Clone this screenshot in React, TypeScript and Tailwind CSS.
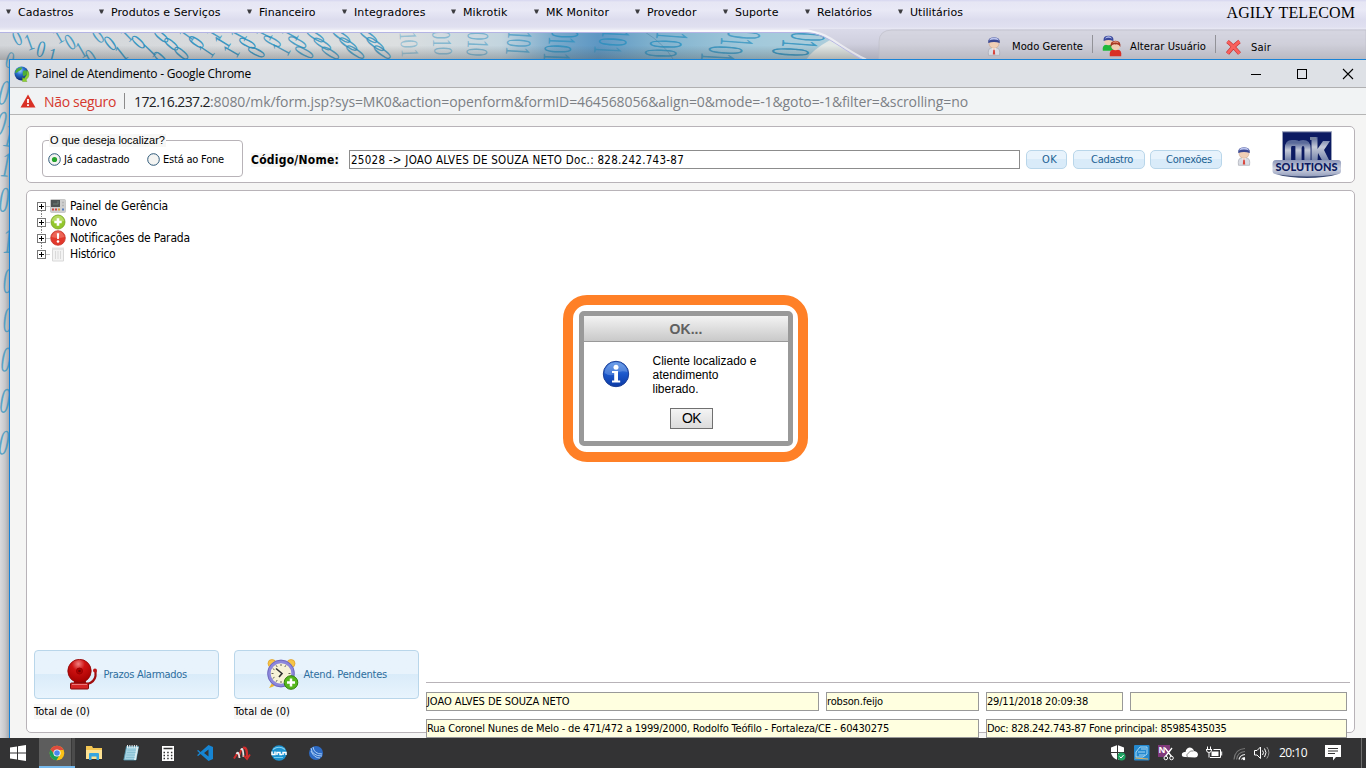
import { useLayoutEffect, useRef, useState } from "react";
import type { ReactNode } from "react";

/* Single line of text whose tracking is adjusted so that it fills the given width. */
function Fit({ w, className = "", children }: { w: number; className?: string; children: string }) {
  const ref = useRef<HTMLSpanElement>(null);
  const [spacing, setSpacing] = useState(0);
  useLayoutEffect(() => {
    if (ref.current) {
      const natural = ref.current.getBoundingClientRect().width;
      setSpacing((w - natural) / children.length);
    }
  }, [w, children]);
  return (
    <span ref={ref} className={`inline-block whitespace-pre ${className}`} style={{ letterSpacing: spacing }}>
      {children}
    </span>
  );
}

const menu = [
  { label: "Cadastros", w: 55.5, box: "w-[93px]" },
  { label: "Produtos e Serviços", w: 109.5, box: "w-[148px]" },
  { label: "Financeiro", w: 56.5, box: "w-[95px]" },
  { label: "Integradores", w: 71.5, box: "w-[109px]" },
  { label: "Mikrotik", w: 44.5, box: "w-[83px]" },
  { label: "MK Monitor", w: 63, box: "w-[101px]" },
  { label: "Provedor", w: 49.5, box: "w-[88px]" },
  { label: "Suporte", w: 43.5, box: "w-[82px]" },
  { label: "Relatórios", w: 55, box: "w-[93px]" },
  { label: "Utilitários", w: 53, box: "w-[93px]" },
];

/* glyph, centre x, centre y, rotation, length of the glyph, opacity */
const topDigits: [string, number, number, number, number, number][] = [
  ["0", 17, 38, -24, 15, 0.8],
  ["1", 29, 42, -20, 16, 0.8],
  ["0", 41, 49, 14, 16, 0.9],
  ["1", 52, 56, 14, 16, 0.9],
  ["0", 10, 60, 15, 16, 0.7],
  ["1", 58, 36, -30, 15, 0.8],
  ["0", 70, 42, -30, 16, 0.8],
  ["1", 81, 50, -30, 16, 0.8],
  ["0", 91, 57, -32, 16, 0.8],
  ["0", 98, 36, -38, 15, 0.8],
  ["0", 110, 43, -38, 16, 0.9],
  ["1", 121, 53, -38, 16, 0.9],
  ["1", 126, 35, -44, 15, 0.8],
  ["0", 138, 42, -46, 16, 0.9],
  ["1", 149, 50, -46, 16, 0.9],
  ["0", 160, 58, -46, 16, 0.9],
  ["0", 161, 36, -50, 17, 0.9],
  ["0", 171, 44, -50, 17, 0.9],
  ["0", 181, 53, -50, 17, 0.9],
  ["1", 186, 35, -54, 17, 0.8],
  ["0", 196, 42, -55, 17, 0.9],
  ["1", 206, 51, -56, 17, 0.9],
  ["1", 213, 34, -58, 17, 0.8],
  ["1", 222, 42, -58, 17, 0.9],
  ["1", 231, 51, -60, 17, 0.9],
  ["1", 238, 35, -62, 17, 0.8],
  ["0", 247, 43, -62, 18, 0.9],
  ["0", 256, 52, -64, 18, 0.9],
  ["1", 263, 34, -62, 18, 0.8],
  ["0", 272, 41, -62, 19, 0.8],
  ["1", 281, 49, -62, 19, 0.8],
  ["1", 289, 34, -62, 19, 0.8],
  ["0", 297, 42, -62, 20, 0.8],
  ["0", 304, 52, -62, 20, 0.8],
  ["0", 315, 36, -58, 20, 0.8],
  ["0", 322, 44, -58, 20, 0.8],
  ["0", 330, 53, -58, 20, 0.8],
  ["0", 341, 36, -56, 21, 0.8],
  ["0", 348, 44, -56, 21, 0.8],
  ["0", 355, 52, -56, 21, 0.8],
  ["0", 368, 36, -54, 21, 0.8],
  ["0", 375, 44, -54, 21, 0.8],
  ["0", 382, 52, -54, 20, 0.8],
  ["1", 408, 36, 88, 17, 0.4],
  ["0", 409, 44, 88, 17, 0.4],
  ["1", 410, 53, 88, 17, 0.4],
  ["0", 441, 35, 90, 19, 0.45],
  ["1", 442, 43, 90, 19, 0.45],
  ["0", 443, 51, 90, 19, 0.45],
  ["0", 478, 36, 92, 21, 0.5],
  ["1", 478, 44, 92, 21, 0.5],
  ["0", 477, 52, 92, 21, 0.5],
  ["1", 520, 35, 93, 24, 0.6],
  ["0", 519, 43, 93, 24, 0.6],
  ["1", 518, 51, 93, 24, 0.6],
  ["0", 565, 34, 92, 27, 0.8],
  ["1", 562, 41, 92, 27, 0.7],
  ["0", 558, 49, 92, 27, 0.8],
  ["1", 557, 57, 92, 27, 0.7],
  ["1", 616, 34, 93, 28, 0.7],
  ["0", 613, 42, 93, 28, 0.8],
  ["1", 608, 50, 93, 28, 0.6],
  ["1", 672, 36, 94, 32, 0.7],
  ["0", 666, 44, 92, 32, 0.8],
  ["0", 661, 53, 92, 32, 0.8],
  ["0", 744, 35, 94, 33, 0.7],
  ["1", 737, 42, 94, 33, 0.7],
  ["0", 726, 50, 93, 34, 0.8],
  ["1", 718, 57, 93, 34, 0.7],
  ["0", 808, 37, 94, 34, 0.8],
  ["1", 800, 44, 94, 36, 0.8],
  ["0", 791, 52, 93, 37, 0.9],
];

const sideDigits: [string, number, number, number][] = [
  ["0", 4, 93, 8],
  ["0", 1, 124, 10],
  ["1", 9, 135, 8],
  ["1", 6, 165, 5],
  ["0", 4, 200, 2],
  ["1", 8, 241, 0],
  ["0", 8, 281, 0],
  ["0", 8, 320, 0],
  ["0", 6, 360, 3],
  ["0", 5, 401, 4],
  ["0", 4, 443, 5],
];

function Backdrop() {
  return (
    <svg className="absolute inset-0" width="1366" height="768" viewBox="0 0 1366 768" aria-hidden="true">
      <defs>
        <linearGradient id="sky" x1="0" x2="880" y1="0" y2="0" gradientUnits="userSpaceOnUse">
          <stop offset="0" stopColor="#d3d6da" />
          <stop offset="0.45" stopColor="#dcdfe0" />
          <stop offset="0.57" stopColor="#c3d5df" />
          <stop offset="0.63" stopColor="#7aaacb" />
          <stop offset="0.68" stopColor="#5e97c3" />
          <stop offset="0.74" stopColor="#7eb0cd" />
          <stop offset="0.85" stopColor="#a2c9db" />
          <stop offset="0.94" stopColor="#abcddb" />
          <stop offset="0.96" stopColor="#dce6e6" />
          <stop offset="1" stopColor="#e6e7e7" />
        </linearGradient>
        <linearGradient id="side" x1="0" x2="10" y1="0" y2="0" gradientUnits="userSpaceOnUse">
          <stop offset="0" stopColor="#d9dadd" />
          <stop offset="0.5" stopColor="#c7c8cb" />
          <stop offset="1" stopColor="#9fa1a5" />
        </linearGradient>
        <linearGradient id="shade" x1="0" x2="0" y1="32" y2="59" gradientUnits="userSpaceOnUse">
          <stop offset="0.5" stopColor="#555" stopOpacity="0" />
          <stop offset="1" stopColor="#555" stopOpacity="0.35" />
        </linearGradient>
        <linearGradient id="bar" x1="0" x2="0" y1="0" y2="33" gradientUnits="userSpaceOnUse">
          <stop offset="0" stopColor="#d6d6f0" />
          <stop offset="0.06" stopColor="#e6e6f4" />
          <stop offset="0.3" stopColor="#e9e9f6" />
          <stop offset="0.6" stopColor="#dcdcee" />
          <stop offset="0.82" stopColor="#e0e0f0" />
          <stop offset="0.94" stopColor="#f2f2f8" />
          <stop offset="1" stopColor="#f0f0f8" />
        </linearGradient>
        <linearGradient id="tools" x1="0" x2="0" y1="29" y2="59" gradientUnits="userSpaceOnUse">
          <stop offset="0" stopColor="#dadae9" />
          <stop offset="0.5" stopColor="#cfcfde" />
          <stop offset="1" stopColor="#adadb9" />
        </linearGradient>
      </defs>
      <rect width="10" height="768" fill="url(#side)" />
      <rect x="0" y="32" width="900" height="28" fill="url(#sky)" />
      <path d="M645 32Q664 44 673 59" fill="none" stroke="#4d83a5" strokeOpacity="0.5" />
      <path d="M830 40Q812 50 806 60H880L850 40Z" fill="#e2e8e6" />
      <g fill="#278ebd" fontFamily="Liberation Serif, serif" textAnchor="middle">
        {topDigits.map(([d, x, y, r, len, o], i) => (
          <text
            key={i}
            transform={`translate(${x} ${y}) rotate(${r}) scale(0.85 ${len / 13.5})`}
            y="6.7"
            fontSize="20"
            fillOpacity={o}
          >
            {d}
          </text>
        ))}
        {sideDigits.map(([d, x, y, r], i) => (
          <text key={i} transform={`translate(${x} ${y}) rotate(${r}) skewX(-6) scale(0.8 1.45)`} y="8" fontSize="25" fillOpacity="0.7">
            {d}
          </text>
        ))}
      </g>
      <rect x="0" y="32" width="900" height="28" fill="url(#shade)" />
      <path d="M0 0H1366V60H863C846 51 832 40 823 36Q814 32 805 32H0Z" fill="url(#bar)" />
      <path d="M808 29H1366V60H863C846 51 832 40 823 36Q815 31 808 29Z" fill="url(#tools)" />
      <path d="M0 32.5H805Q814 32.5 823 36.500C832 40 846 51 863 60" fill="none" stroke="#b4b4e4" />
      <path d="M0 31H806Q815 31 825 35.500C836 41 848 51 866 59.500" fill="none" stroke="#fff" strokeOpacity="0.6" strokeWidth="2" />
      <path d="M879 60V42Q879 30 892 30H1366V60Z" fill="#d0d0d4" fillOpacity="0.35" stroke="#bdbdc6" strokeOpacity="0.6" />
    </svg>
  );
}

function Person() {
  return (
    <svg width="16" height="20" viewBox="0 0 16 20">
      <path d="M2.500 19.300Q1.500 12.500 5 12H11Q14.500 12.500 13.500 19.300Z" fill="#d9dce4" stroke="#a9abb5" strokeWidth="0.7" />
      <path d="M5.500 12L8 15 10.500 12Z" fill="#fff" />
      <path d="M7.300 13.500H8.700L9.200 18.500H6.800Z" fill="#d9443b" />
      <ellipse cx="8" cy="7.500" rx="5" ry="4.800" fill="#f0cfb6" stroke="#c4a08a" strokeWidth="0.5" />
      <path d="M2.200 7Q1.500 1.300 8 1.200 14.500 1.300 13.800 7 11 6 8 6 5 6 2.200 7Z" fill="#3a4791" />
      <path d="M3 4.500Q4 1.500 8 1.500 12 1.500 13 4.500 8 2.500 3 4.500Z" fill="#bcc5ee" />
    </svg>
  );
}

function WindowIcons() {
  return (
    <div className="flex items-center">
      <svg width="110" height="14" viewBox="0 0 110 14" fill="none" stroke="#000">
        <path d="M2 7.500H12" />
        <rect x="48.500" y="2.500" width="9" height="9" />
        <path d="M94 2L104 12M104 2L94 12" strokeWidth="1.100" />
      </svg>
    </div>
  );
}

function Globe() {
  return (
    <svg width="16" height="16" viewBox="0 0 16 16">
      <defs>
        <radialGradient id="globe" cx="0.4" cy="0.3" r="0.7">
          <stop offset="0" stopColor="#a5d8ff" />
          <stop offset="0.4" stopColor="#2a74d2" />
          <stop offset="1" stopColor="#0b2570" />
        </radialGradient>
      </defs>
      <circle cx="7.500" cy="7.500" r="7" fill="url(#globe)" />
      <path d="M2 4Q4 1 8 1.200 8 4 5 5 3 7 1 7ZM9 5Q13 3 13.500 7 12 10 9.500 10.500 8 8 9 5Z" fill="#4cae3b" />
      <path d="M13 4Q17.500 9 12 14L13 15.500 8.500 15.500 8.500 11.500 10.200 12.500Q14 9 13 4Z" fill="#8ed32f" stroke="#5d9b1b" strokeWidth="0.4" />
    </svg>
  );
}

const tahoma = "font-['DejaVu_Sans_Condensed','DejaVu_Sans',sans-serif]";

function Radio({ on }: { on?: boolean }) {
  return (
    <svg width="13" height="13" viewBox="0 0 13 13">
      <circle cx="6.500" cy="6.500" r="5.800" fill="#f4f4f2" stroke="#2d5878" strokeWidth="1" />
      {on && <circle cx="6.500" cy="6.500" r="2.600" fill="#25a32b" />}
    </svg>
  );
}

function PillButton({ w, className, children }: { w: number; className: string; children: string }) {
  return (
    <button
      className={`flex h-[19px] items-center rounded-[5px] border border-[#b9d6ea] bg-linear-to-b from-[#e8f3fc] from-50% to-[#d9ebf9] to-50% pt-[2px] text-[11px] text-[#216293] ${className}`}
    >
      <Fit w={w}>{children}</Fit>
    </button>
  );
}

function Logo() {
  return (
    <svg width="70" height="48" viewBox="0 0 70 48">
      <defs>
        <linearGradient id="silver" x1="0" x2="0" y1="0" y2="1">
          <stop offset="0" stopColor="#59699a" />
          <stop offset="0.4" stopColor="#c5cad8" />
          <stop offset="1" stopColor="#6e7da6" />
        </linearGradient>
        <linearGradient id="plate" x1="0" x2="0" y1="0" y2="1">
          <stop offset="0" stopColor="#8b96b8" />
          <stop offset="0.5" stopColor="#cdd1de" />
          <stop offset="1" stopColor="#8e99ba" />
        </linearGradient>
      </defs>
      <rect x="10.500" y="0.800" width="49" height="31" fill="#0c1b62" stroke="#98a0ba" />
      <g fill="none" stroke="url(#silver)" strokeWidth="6.200" strokeLinejoin="round">
        <path d="M16 30V17Q16 12 20 12H23Q26.500 12 26.500 16V29M26.500 17Q27 12 31 12 35.500 12 35.500 17V30" />
      </g>
      <path d="M39.500 6H45.500V18L51 10H58L52 19 58 31H51L46 22 45.500 30H39.500Z" fill="url(#silver)" />
      <path d="M38 6H44V9H38Z" fill="#77849f" />
      <path d="M4 29H66Q69.500 29 69 33V40Q69 43 65 43.500 35 49 5 43.500 0.500 43 0.500 40V33Q0.500 29 4 29Z" fill="url(#plate)" />
      <path d="M4 43.200Q35 48 66 43.200 52 47 35 47 18 47 4 43.200Z" fill="#36456f" />
      <text x="3.500" y="39.500" fontFamily="Lato, Liberation Sans, sans-serif" fontWeight="900" fontSize="11" fill="#0b1a60" textLength="62" lengthAdjust="spacingAndGlyphs">
        SOLUTIONS
      </text>
    </svg>
  );
}

function Field({ w, className, children }: { w?: number; className: string; children?: string }) {
  return (
    <div className={`flex h-[19px] shrink-0 items-center border border-[#999] bg-[#ffffe0] pt-[2px] text-[11px] ${className}`}>
      {children && w ? <Fit w={w}>{children}</Fit> : null}
    </div>
  );
}

function PanelIcon() {
  return (
    <svg width="16" height="16" viewBox="0 0 16 16">
      <rect x="0.500" y="1.500" width="15" height="13" rx="1" fill="#cfcfcf" stroke="#b5b5b5" strokeWidth="0.6" />
      <rect x="1" y="2" width="9" height="7" fill="#4d5353" />
      <path d="M3 6H8V3" fill="none" stroke="#6f7f77" />
      <path d="M12 4.500H14M12 7.500H14" stroke="#b5b5b5" strokeWidth="1.500" />
      <rect x="2" y="10.500" width="2" height="2" fill="#ce4a45" />
      <rect x="5" y="10.500" width="2" height="2" fill="#ce4a45" />
      <rect x="8" y="10.500" width="2" height="2" fill="#e19a3d" />
      <rect x="12" y="10.500" width="2" height="2" fill="#527bc0" />
    </svg>
  );
}

function NewIcon() {
  return (
    <svg width="16" height="16" viewBox="0 0 16 16">
      <circle cx="8" cy="8" r="7" fill="#93c62c" stroke="#78a323" strokeWidth="0.8" />
      <path d="M1.800 7Q3 2 8 1.600 13 2 14.200 7 8 9 1.800 7Z" fill="#c2e276" fillOpacity="0.7" />
      <path d="M8 4.300V11.700M4.300 8H11.700" stroke="#fff" strokeWidth="2.600" />
    </svg>
  );
}

function AlertIcon() {
  return (
    <svg width="16" height="16" viewBox="0 0 16 16">
      <circle cx="8" cy="8" r="7.300" fill="#e2382c" stroke="#c43a31" strokeWidth="0.8" />
      <path d="M1.500 7Q3 1.500 8 1.200 13 1.500 14.500 7 8 9 1.500 7Z" fill="#f38273" fillOpacity="0.6" />
      <path d="M6.800 3.200H9.200L8.800 9H7.200Z" fill="#fff" />
      <circle cx="8" cy="11.500" r="1.300" fill="#fff" />
    </svg>
  );
}

function HistoryIcon() {
  return (
    <svg width="16" height="16" viewBox="0 0 16 16">
      <path d="M2.500 3H13.500V15H2.500Z" fill="#f3f3f3" stroke="#d8d8d8" />
      <path d="M2 1.500H14V3.500H2Z" fill="#e2e2e2" />
      <path d="M5.500 5V13M8 5V13M10.500 5V13" stroke="#d9d9d9" />
    </svg>
  );
}

const tree: { label: string; w: number; icon: ReactNode }[] = [
  { label: "Painel de Gerência", w: 98, icon: <PanelIcon /> },
  { label: "Novo", w: 27, icon: <NewIcon /> },
  { label: "Notificações de Parada", w: 120, icon: <AlertIcon /> },
  { label: "Histórico", w: 45.5, icon: <HistoryIcon /> },
];

function BellIcon() {
  return (
    <svg width="32" height="32" viewBox="0 0 32 32">
      <defs>
        <radialGradient id="bell" cx="0.45" cy="0.2" r="0.8">
          <stop offset="0" stopColor="#f08080" />
          <stop offset="0.35" stopColor="#cf1212" />
          <stop offset="1" stopColor="#a30000" />
        </radialGradient>
      </defs>
      <path d="M28.500 12V17Q27.500 23 20.500 25" fill="none" stroke="#a00d0d" strokeWidth="2.200" />
      <circle cx="28" cy="11.500" r="2" fill="#bd1717" />
      <path d="M7.500 20H18.500L19.500 26H6.500Z" fill="#9c0c0c" />
      <circle cx="12.500" cy="12" r="11.700" fill="url(#bell)" stroke="#8e0808" strokeWidth="0.800" />
      <circle cx="12.500" cy="12" r="3" fill="#b40000" stroke="#990000" />
      <circle cx="12.500" cy="12" r="1.300" fill="#6e0000" />
      <rect x="3.500" y="24" width="18" height="6" rx="0.800" fill="#d42525" stroke="#850808" />
      <path d="M5 25.500H20" stroke="#ec7777" />
    </svg>
  );
}

function ClockIcon() {
  return (
    <svg width="32" height="32" viewBox="0 0 32 32">
      <circle cx="5" cy="4.500" r="4" fill="#f6c445" stroke="#dc9b22" strokeWidth="0.700" />
      <circle cx="24" cy="4.500" r="4" fill="#f6c445" stroke="#dc9b22" strokeWidth="0.700" />
      <path d="M5 24L2 29 5 28 9 26Z" fill="#edb62f" />
      <circle cx="14" cy="14.500" r="12" fill="#f6f2d7" stroke="#8c87dc" strokeWidth="3.300" />
      <circle cx="14" cy="14.500" r="13.400" fill="none" stroke="#5a54a8" strokeWidth="0.600" />
      <g stroke="#686656" strokeWidth="1">
        <path d="M14 5V7M14 22V24M4.500 14.500H6.500M21.500 14.500H23.500M9.200 6.300L10.200 8M18.800 6.300L17.800 8M5.800 9.700L7.500 10.700M5.800 19.300L7.500 18.300M9.200 22.700L10.200 21" />
      </g>
      <path d="M9 9.500L15 14.500 12 18" fill="none" stroke="#2f3030" strokeWidth="1.600" />
      <circle cx="24" cy="23.500" r="6.800" fill="#55b71d" stroke="#318307" />
      <path d="M24 19.500V27.500M20 23.500H28" stroke="#fff" strokeWidth="2.500" />
    </svg>
  );
}

function BigButton({ icon, w, label }: { icon: ReactNode; w: number; label: string }) {
  return (
    <button className="flex h-[49px] w-[185px] items-center gap-[5px] rounded-[4px] border border-[#b9d6ea] bg-linear-to-b from-[#e8f3fc] from-48% via-[#d9ebf9] via-48% to-[#e8f4fd] pl-[31.5px] text-[11px] text-[#2e6e9e]">
      {icon}
      <Fit w={w} className="mt-px">{label}</Fit>
    </button>
  );
}

function InfoIcon() {
  return (
    <svg width="28" height="28" viewBox="0 0 28 28">
      <defs>
        <linearGradient id="info" x1="0" x2="0" y1="0" y2="1">
          <stop offset="0" stopColor="#5c94e6" />
          <stop offset="0.5" stopColor="#1b57cb" />
          <stop offset="1" stopColor="#0c3aa5" />
        </linearGradient>
      </defs>
      <circle cx="14" cy="14" r="12.700" fill="url(#info)" stroke="#1c3f96" />
      <path d="M2.500 13Q4 3 14 2.500 24 3 25.500 12 18 10 13 14 8 17 2.500 13Z" fill="#9bbcf0" fillOpacity="0.35" />
      <circle cx="14" cy="7.300" r="2.500" fill="#fff" />
      <path d="M10 11H16V20.500H18.200V22.500H10V20.500H12.200V13H10Z" fill="#fff" />
    </svg>
  );
}

function OkDialog() {
  return (
    <div className="absolute left-[563px] top-[295px] h-[167px] w-[245px] rounded-[24px] border-[10px] border-[#ff8027] bg-white p-[6px] font-['Liberation_Sans',sans-serif]">
      <div className="flex h-[135px] w-[214px] flex-col rounded-[5px] border-[5px] border-[#999] bg-white">
        <div className="flex h-[26px] shrink-0 items-center justify-center border-b border-[#999] bg-linear-to-b from-[#f3f3f3] to-[#c9c9c9] pt-px text-[14px] font-bold text-[#606060]">
          <Fit w={33}>OK...</Fit>
        </div>
        <div className="flex pl-[18px] pt-[12px]">
          <div className="pt-[6px]">
            <InfoIcon />
          </div>
          <p className="ml-[22.500px] text-[12px] leading-[14px] text-black">
            <Fit w={104}>Cliente localizado e</Fit>
            <br />
            <Fit w={66}>atendimento</Fit>
            <br />
            <Fit w={46}>liberado.</Fit>
          </p>
        </div>
        <button className="ml-[86px] mt-[12px] flex h-[21px] w-[43px] shrink-0 items-center justify-center border border-[#707070] bg-linear-to-b from-[#f4f4f4] to-[#dcdcdc] text-[14px] text-black">
          <Fit w={19}>OK</Fit>
        </button>
      </div>
    </div>
  );
}

const taskIcons: ReactNode[] = [
  <svg width="18" height="18" viewBox="0 0 18 18">
    <path d="M1 3.500L8 2.500V8.500H1ZM9 2.300L17 1V8.500H9ZM1 9.500H8V15.500L1 14.500ZM9 9.500H17V17L9 15.700Z" fill="#fff" />
  </svg>,
  <svg width="16" height="16" viewBox="0 0 16 16">
    <circle cx="8" cy="8" r="7.300" fill="#fbc116" />
    <path d="M1.500 4.500A7.300 7.300 0 0 1 14.600 5H8L5.300 9.500Z" fill="#dd4b3e" />
    <path d="M1.500 4.500A7.300 7.300 0 0 0 7.500 15.300L10.600 10 5.400 9.600Z" fill="#1c9e58" />
    <circle cx="8" cy="8" r="3.600" fill="#fff" />
    <circle cx="8" cy="8" r="2.800" fill="#4b87ee" />
  </svg>,
  <svg width="18" height="16" viewBox="0 0 18 16">
    <path d="M1 1H7L8 3H17V14H1Z" fill="#f3c653" />
    <path d="M1 5H17V14H1Z" fill="#fde293" />
    <path d="M4 15V9Q4 8 5 8H13Q14 8 14 9V15H11.500V11.500H6.500V15Z" fill="#37a5e0" />
  </svg>,
  <svg width="16" height="18" viewBox="0 0 16 18">
    <path d="M3.500 2.500H15.500L13 16H0.800Z" fill="#a5d3e3" stroke="#5497ae" strokeWidth="0.800" />
    <path d="M13.500 3H15.500L13 16H11Z" fill="#d9ecf1" />
    <path d="M4.500 6H13M4 8.500H12.500M3.500 11H12M3 13.500H11.500" stroke="#7fbccf" strokeWidth="0.800" />
    <path d="M4.500 1V4M6.800 1V4M9.100 1V4M11.400 1V4M13.700 1V4" stroke="#e9edef" />
  </svg>,
  <svg width="14" height="17" viewBox="0 0 14 17">
    <rect x="1" y="1" width="12" height="15" fill="#fff" />
    <path d="M2.500 3.500H11.500" stroke="#333" strokeWidth="1.500" />
    <path d="M2.500 7.500H11.500M2.500 10.500H11.500M2.500 13.500H11.500" stroke="#333" strokeWidth="1.500" strokeDasharray="1.500 2.200" />
  </svg>,
  <svg width="18" height="18" viewBox="0 0 18 18">
    <path d="M12.500 1L17 3V15L12.500 17 4.500 10 2.200 12 1 11.300 3.500 9 1 6.700 2.200 6 4.500 8ZM12.500 5.500L8 9 12.500 12.500Z" fill="#1685d3" fillRule="evenodd" />
  </svg>,
  <svg width="18" height="16" viewBox="0 0 18 16" fill="none">
    <path d="M1 13.500L4.500 8M5.500 12.500L8.500 4" stroke="#d22b2b" strokeWidth="2" />
    <path d="M3.500 9Q5.500 5 6.500 13M8 5Q10 1 10.500 12" stroke="#e4e4e4" strokeWidth="1.800" />
    <path d="M10 3Q14.500 1.500 14 12" stroke="#d22b2b" strokeWidth="2.400" />
    <path d="M10.800 10.500L14 14 17 9.500" stroke="#d22b2b" strokeWidth="1.800" />
  </svg>,
  <svg width="18" height="18" viewBox="0 0 18 18">
    <circle cx="9" cy="9" r="7.700" fill="#1c92cf" />
    <path d="M3 5.500Q9 1 15 5.500" fill="none" stroke="#8bd2f2" strokeWidth="1.200" />
    <path d="M2 7.500V10.500H5V7.500M7 11V8.500H10V10.500H12M13 11V8.500H16V11" fill="none" stroke="#fff" strokeWidth="1.500" />
    <path d="M4 13.500H13" stroke="#75cdef" strokeWidth="1" />
  </svg>,
  <svg width="16" height="16" viewBox="0 0 16 16">
    <circle cx="8" cy="8" r="7" fill="#2d6bc5" />
    <path d="M3 3Q4 11 14 11M5 2Q6 9 14 9M3 6Q6 13 12 13" fill="none" stroke="#b9d9fa" strokeWidth="0.900" />
  </svg>,
];

function Taskbar() {
  return (
    <footer className="relative flex h-[30px] shrink-0 items-center bg-[#333334]">
      {taskIcons.map((icon, i) => (
        <div
          key={i}
          className={
            i === 0
              ? "flex h-full w-[36px] items-center justify-center"
              : i === 1
                ? "ml-[3px] flex h-full w-[36px] items-center justify-center border-b-2 border-[#76b9ed] bg-linear-to-r from-[#5d5d5d] from-88% via-[#363636] via-90% to-[#4b4b4b] to-92% pt-[2px]"
                : "flex h-full w-[37px] items-center justify-center"
          }
        >
          {icon}
        </div>
      ))}
      <div className="ml-auto flex h-full items-center">
        <svg width="166" height="22" viewBox="1110 742 166 22" fill="none">
          <path d="M1117.500 745L1124 747.500V753Q1123 758 1117.500 760 1112 758 1111 753V747.500Z" fill="#fff" />
          <path d="M1117.500 745V760M1111 752.500H1124" stroke="#333" />
          <circle cx="1121.500" cy="756.500" r="4" fill="#1ea362" />
          <path d="M1119.500 756.500L1121 758 1123.600 755" stroke="#fff" />
          <rect x="1134" y="745" width="15.500" height="15.500" rx="1" fill="#2489cf" />
          <path d="M1136 752L1140 747H1147V754L1143 757H1136ZM1138 752H1145M1139 755H1145M1141 749H1146" stroke="#a6d8f4" />
          <path d="M1135 758L1148 759" stroke="#e0b45d" />
          <path d="M1158 745H1170V751L1164 757H1158Z" fill="#80397b" />
          <text x="1158.500" y="752.500" fill="#fff" fontFamily="Open Sans, sans-serif" fontWeight="bold" fontSize="8.500">
            N
          </text>
          <path d="M1165 748L1171.500 756.500M1172 748L1165.500 756.500" stroke="#fff" strokeWidth="1.300" />
          <circle cx="1165.800" cy="758" r="1.800" stroke="#fff" />
          <circle cx="1171.500" cy="758" r="1.800" stroke="#fff" />
          <path d="M1185 757Q1181 757 1182 753.500 1183 751.500 1185.500 752 1186 748 1189.500 747.500 1193 747.500 1194 751 1198 751.500 1198 755 1197.500 757.500 1195 757.500Z" fill="#fff" />
          <path d="M1187.500 757.500Q1185.500 754.500 1188.500 753 1190 750 1193.500 751" stroke="#555" strokeWidth="0.700" />
          <path d="M1207.500 746.500V749M1210.500 746.500V749M1206 749.500H1212M1206.500 750Q1206.500 752.500 1209 752.500 1211.500 752.500 1211.500 750M1209 752.500V757.500M1210 757.500H1220.500V749.500H1213.500" stroke="#fff" />
          <rect x="1211.500" y="751.500" width="7" height="4.500" fill="#fff" />
          <path d="M1221.700 751.500V755.500" stroke="#fff" />
          <path d="M1234 759.500Q1235 749 1245 748.500M1236.500 759.500Q1237.500 752 1245 751.500" stroke="#777" strokeWidth="1.200" />
          <path d="M1239 759.500Q1240 755 1245 754.500M1241.500 759.500Q1242.500 757.500 1245 757.500" stroke="#e5e5e5" strokeWidth="1.200" />
          <circle cx="1244" cy="759" r="1.200" fill="#fff" />
          <path d="M1254.500 750.500H1257L1260.500 747V758.500L1257 755H1254.500Z" stroke="#fff" />
          <path d="M1262.500 750.500Q1264.500 752.700 1262.500 755M1264.500 748.500Q1267.500 752.500 1264.500 757" stroke="#fff" />
          <path d="M1266.800 747Q1271 752.500 1266.800 758.500" stroke="#999" />
        </svg>
        <span className="ml-[3px] w-[46px] font-['Open_Sans','Noto_Sans',sans-serif] text-[12px] text-white">
          <Fit w={28}>20:10</Fit>
        </span>
        <svg className="mr-[20px]" width="16" height="16" viewBox="0 0 16 16">
          <path d="M0 0H16V12H11L8 15.500V12H0Z" fill="#fff" />
          <path d="M3 3.500H13M3 6H13M3 8.500H10" stroke="#333" />
        </svg>
        <div className="mr-[4px] h-full w-px bg-[#6e6e6e]" />
      </div>
    </footer>
  );
}

export default function App() {
  return (
    <div className={`relative flex h-[768px] w-[1366px] flex-col overflow-hidden bg-[#c9cacd] text-black ${tahoma}`}>
      <Backdrop />

      <header className="relative flex h-[59px] shrink-0 flex-col font-['DejaVu_Sans',sans-serif] text-[11px]">
        <div className="flex h-[24px] items-center pl-[6px]">
          {menu.map((m) => (
            <div key={m.label} className={`flex shrink-0 items-center ${m.box}`}>
              <svg className="-mt-px mr-[7px] shrink-0" width="5" height="5" viewBox="0 0 5 5">
                <path d="M0 0.500H5L3.200 4.500H1.800Z" fill="#3c3c40" />
              </svg>
              <Fit w={m.w} className="mt-[2px]">{m.label}</Fit>
            </div>
          ))}
          <div className="ml-auto mr-[11px] mt-px font-['Liberation_Serif',serif] text-[16px]">
            <Fit w={128.5}>AGILY TELECOM</Fit>
          </div>
        </div>
        <div className="mt-[9px] flex h-[26px] items-center pl-[986px] text-[10px]">
          <Person />
          <Fit w={71} className="ml-[10px]">Modo Gerente</Fit>
          <div className="ml-[9px] mt-[-4px] h-[18px] w-px bg-[#929298]" />
          <div className="ml-[9px] flex w-[20px] items-start">
            <div className="-mr-[6px] -mt-px w-[13px] shrink-0">
              <svg width="13" height="17" viewBox="0 0 16 20">
                <path d="M1 19Q0 12 5 11.500H11Q16 12 15 19Z" fill="#1fb73a" />
                <circle cx="8" cy="7" r="5.300" fill="#efcdb2" />
                <path d="M2 7Q1 0.500 8 0.500 15 0.500 14 7 8 4.500 2 7Z" fill="#3a489c" />
                <path d="M3.500 4Q5 1 8 1 11 1 12.500 4 8 2 3.500 4Z" fill="#aeb9ea" />
              </svg>
            </div>
            <svg className="mt-[4px] shrink-0" width="13" height="17" viewBox="0 0 16 20">
              <path d="M1 19.500Q0 12 5 11.500H11Q16 12 15 19.500Z" fill="#da3026" />
              <circle cx="8" cy="7" r="5.300" fill="#efcdb2" />
              <path d="M2 8Q1 0.500 8 0.500 15 0.500 14 8 12 4 8 5 4 4 2 8Z" fill="#a53723" />
              <path d="M4 3.500Q6 1 8 1 11 1 12 3.500 8 2 4 3.500Z" fill="#eda184" />
            </svg>
          </div>
          <Fit w={76} className="ml-[8px]">Alterar Usuário</Fit>
          <div className="ml-[9px] mt-[-4px] h-[18px] w-px bg-[#929298]" />
          <svg className="ml-[9px] mt-[2px]" width="17" height="17" viewBox="0 0 17 17">
            <path d="M2.500 2.500Q7 6 14.500 14.500M14.500 2.500Q8 7 2.500 14.500" stroke="#c23636" strokeWidth="4" />
            <path d="M2.500 2.500Q7 6 14.500 14.500M14.500 2.500Q8 7 2.500 14.500" stroke="#f9605d" strokeWidth="2.800" />
          </svg>
          <Fit w={20} className="ml-[9px] mt-[2px]">Sair</Fit>
        </div>
      </header>

      <section className="relative ml-[9px] flex min-h-0 flex-1 flex-col border-l border-t border-[#1883d7] bg-[#f5f5f4]">
        <div className="flex h-[28px] shrink-0 items-center border-b border-[#b0b0b1] bg-[#dee1e6] pl-[4px] font-['Open_Sans','Noto_Sans',sans-serif] text-[12px]">
          <Globe />
          <Fit w={216} className="ml-[5px] mt-px">Painel de Atendimento - Google Chrome</Fit>
          <div className="ml-auto mr-[7px]">
            <WindowIcons />
          </div>
        </div>
        <div className="flex h-[27px] shrink-0 items-center border-b border-[#b5b5b5] bg-[#f1f3f4] pl-[10px] font-['Open_Sans','Noto_Sans',sans-serif] text-[14px] text-[#7c8085]">
          <svg width="16" height="14" viewBox="0 0 16 14">
            <path d="M8 0.500L15.500 13.500H0.500Z" fill="#d93025" />
            <path d="M8 5V9M8 10.300V12" stroke="#fff" strokeWidth="1.800" />
          </svg>
          <Fit w={72} className="ml-[8px] text-[#d5382e]">Não seguro</Fit>
          <div className="ml-[8px] mr-[9px] h-[16px] w-px bg-[#8b8b8b]" />
          <Fit w={76} className="text-[#202124]">172.16.237.2</Fit>
          <Fit w={758}>:8080/mk/form.jsp?sys=MK0&action=openform&formID=464568056&align=0&mode=-1&goto=-1&filter=&scrolling=no</Fit>
        </div>

        <main className="flex min-h-0 flex-1 flex-col pl-[16px] pt-[11px]">
          <div className="flex h-[57px] w-[1329px] shrink-0 rounded-[5px] border border-[#b8b3b8] bg-white">
            <div className="ml-[15px] mt-[13px] h-[37px] w-[201px] rounded-[4px] border border-[#b8b3b8]">
              <div className="-mt-[7px] ml-[6px] h-[13px] w-[117px] bg-[#f7f7f6] pl-[1px] font-['Liberation_Sans',sans-serif] text-[11px] leading-[12px]">
                <Fit w={115}>O que deseja localizar?</Fit>
              </div>
              <div className="mt-[5px] flex items-center pl-[5px] text-[11px] leading-[13px]">
                <Radio on />
                <Fit w={65.5} className="ml-[3px] mt-px">Já cadastrado</Fit>
                <div className="ml-[17.5px]">
                  <Radio />
                </div>
                <Fit w={61} className="ml-[3px] mt-px">Está ao Fone</Fit>
              </div>
            </div>
            <div className="ml-[8px] mt-[26px] h-[14px] w-[88px] bg-[#f7f7f6] text-[12px] font-bold leading-[14px]">
              <Fit w={88}>Código/Nome:</Fit>
            </div>
            <div className="ml-[10px] mt-[23px] flex h-[19px] w-[671px] items-center border border-[#8c8c8c] bg-white pl-px pt-[2px] text-[11.5px]">
              <Fit w={333}>{"25028 -> JOAO ALVES DE SOUZA NETO Doc.: 828.242.743-87"}</Fit>
            </div>
            <div className="ml-[6px] mt-[23px] flex gap-[6px]">
              <PillButton w={15} className="w-[41px] pl-[15px]">OK</PillButton>
              <PillButton w={42} className="w-[72px] pl-[17px]">Cadastro</PillButton>
              <PillButton w={46} className="-ml-px w-[72px] pl-[15px]">Conexões</PillButton>
            </div>
            <div className="ml-[14px] mt-[19px]">
              <Person />
            </div>
            <div className="ml-[20px] mt-[4px]">
              <Logo />
            </div>
          </div>

          <div className="mt-[7px] flex h-[543px] w-[1329px] shrink-0 flex-col rounded-[5px] border border-[#b8b3b8] bg-white">
            <ul className="pl-[10px] pt-[7px] text-[12px] leading-[16px]">
              {tree.map((t, i) => (
                <li key={t.label} className="flex h-[16px] items-center">
                  <svg width="13" height="16" viewBox="0 0 13 16">
                    {i > 0 && <path d="M4.500 0V4" stroke="#888" strokeDasharray="1 1" />}
                    {i < 3 && <path d="M4.500 13V16" stroke="#888" strokeDasharray="1 1" />}
                    <path d="M9.500 8.500H13" stroke="#888" strokeDasharray="1 1" />
                    <rect x="0.500" y="4.500" width="8" height="8" fill="#fff" stroke="#777" />
                    <path d="M2 8.500H7M4.500 6V11" stroke="#000" />
                  </svg>
                  {t.icon}
                  <Fit w={t.w} className="ml-[4px]">{t.label}</Fit>
                </li>
              ))}
            </ul>
            <div className="mt-auto flex h-[82px] shrink-0 pl-[7px]">
              <div className="flex w-[200px] flex-col items-start text-[11px]">
                <BigButton icon={<BellIcon />} w={83.5} label="Prazos Alarmados" />
                <div className="mt-[5px] bg-[#f7f7f6] leading-[15px]">
                  <Fit w={56}>Total de (0)</Fit>
                </div>
              </div>
              <div className="flex w-[192px] flex-col items-start text-[11px]">
                <BigButton icon={<ClockIcon />} w={83.5} label="Atend. Pendentes" />
                <div className="mt-[5px] bg-[#f7f7f6] leading-[15px]">
                  <Fit w={56}>Total de (0)</Fit>
                </div>
              </div>
              <div className="mt-[32px] flex w-[924px] flex-col border-t border-[#b8b3b8] pt-[9px]">
                <div className="flex gap-[7px]">
                  <Field w={142.5} className="w-[393px]">JOAO ALVES DE SOUZA NETO</Field>
                  <Field w={56} className="w-[153px]">robson.feijo</Field>
                  <Field w={101} className="w-[137px]">29/11/2018 20:09:38</Field>
                  <Field className="w-[217px]" />
                </div>
                <div className="mt-[8px] flex gap-[7px]">
                  <Field w={462} className="w-[553px]">
                    Rua Coronel Nunes de Melo - de 471/472 a 1999/2000, Rodolfo Teófilo - Fortaleza/CE - 60430275
                  </Field>
                  <Field w={239.5} className="w-[361px]">Doc: 828.242.743-87 Fone principal: 85985435035</Field>
                </div>
              </div>
            </div>
          </div>
        </main>
      </section>

      <OkDialog />
      <Taskbar />
    </div>
  );
}
